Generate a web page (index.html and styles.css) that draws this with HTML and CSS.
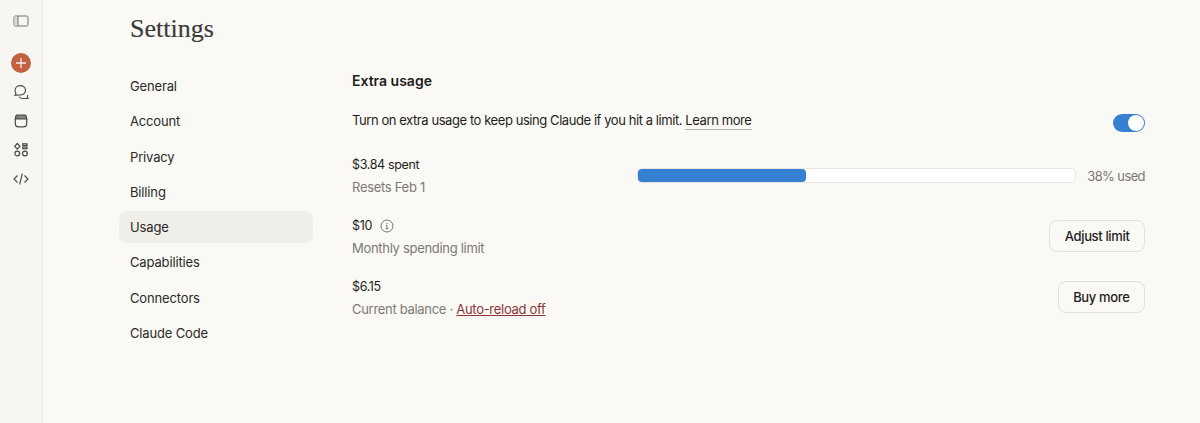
FILE: index.html
```html
<!DOCTYPE html>
<html lang="en">
<head>
    <meta charset="UTF-8">
    <title>Settings</title>
    <link rel="stylesheet" href="styles.css">
</head>
<body>
    <div class="app">
        <aside class="rail">
            <div class="railIcon toggleIcon">
                <svg width="16" height="14" viewBox="0 0 16 14" fill="none" stroke="#77756f" stroke-width="1"><rect x="1" y="2" width="14" height="10" rx="1.2"/><rect x="1.5" y="2.5" width="3.5" height="9" fill="#dcdad3" stroke="none"/><path d="M5 2v10"/></svg>
            </div>
            <div class="newChat">
                <svg width="12" height="12" viewBox="0 0 12 12" stroke="#f7ede8" stroke-width="1.3"><path d="M6 1v10M1 6h10"/></svg>
            </div>
            <div class="railIcon">
                <svg width="16" height="16" viewBox="0 0 16 16" fill="none" stroke="#4a4945" stroke-width="1.1"><path d="M7.3 1.6c3 0 5.2 2 5.2 4.7 0 1.1-.4 2.1-1 2.9-.9 1.1-2.4 1.8-4.2 1.8-1.5 0-3.1.1-5.3.2.9-.8 1-1.3.8-2.1-.4-.8-.7-1.8-.7-2.8 0-2.7 2.2-4.7 5.2-4.7z"/><path d="M6 12.7c.8 1.2 2.3 1.8 4 1.8h4.9c-.6-.6-.7-1-.6-1.7.2-.7.4-1.2.4-1.8"/></svg>
            </div>
            <div class="railIcon">
                <svg width="14" height="14" viewBox="0 0 14 14" fill="none" stroke="#4a4945" stroke-width="1.2"><path d="M3 1h8c.5 0 .8.3 1 .8l.7 3.2H1.300L2 1.800c.2-.5.5-.8 1-.8z" fill="#85837e"/><path d="M1.300 5v4.500c0 2 1.300 3.300 3.300 3.300h4.800c2 0 3.300-1.300 3.300-3.300V5"/></svg>
            </div>
            <div class="railIcon">
                <svg width="16" height="16" viewBox="0 0 16 16" fill="none" stroke="#4a4945" stroke-width="1.2"><path d="M4.300 1.500l2.600 2.800-2.600 2.800-2.600-2.800z"/><rect x="9.800" y="1.800" width="4.200" height="1.700"/><rect x="9.800" y="5" width="4.200" height="1.700"/><circle cx="4.300" cy="11.500" r="2.400"/><circle cx="11.900" cy="11.500" r="2.400"/></svg>
            </div>
            <div class="railIcon">
                <svg width="16" height="14" viewBox="0 0 16 14" fill="none" stroke="#4a4945" stroke-width="1.1"><path d="M4.500 3.500L1 7l3.500 3.500M11.500 3.500L15 7l-3.500 3.500M9.300 1.500L6.700 12.500"/></svg>
            </div>
        </aside>

        <main class="page">
            <h1 class="pageTitle">Settings</h1>
            <div class="columns">
                <nav class="sideNav">
                    <a class="navItem">General</a>
                    <a class="navItem">Account</a>
                    <a class="navItem">Privacy</a>
                    <a class="navItem">Billing</a>
                    <a class="navItem active">Usage</a>
                    <a class="navItem">Capabilities</a>
                    <a class="navItem">Connectors</a>
                    <a class="navItem">Claude Code</a>
                </nav>

                <section class="content">
                    <h2 class="sectionTitle">Extra usage</h2>

                    <div class="row introRow">
                        <p class="introText">Turn on extra usage to keep using Claude if you hit a limit. <a class="learnMore">Learn more</a></p>
                        <div class="toggle"><span class="knob"></span></div>
                    </div>

                    <div class="row spentRow">
                        <div class="info">
                            <div class="amount">$3.84 spent</div>
                            <div class="sub">Resets Feb 1</div>
                        </div>
                        <div class="meter">
                            <div class="bar"><div class="barFill" style="width: 38.5%"></div></div>
                            <span class="used">38% used</span>
                        </div>
                    </div>

                    <div class="row limitRow">
                        <div class="info">
                            <div class="amount">$10
                                <svg class="infoIcon" width="14" height="14" viewBox="0 0 14 14" fill="none" stroke="#77756f"><circle cx="7" cy="7" r="6"/><path d="M7 6.300v3.300M5.800 6.300H7M5.600 9.700h2.800M7 4v1"/></svg>
                            </div>
                            <div class="sub">Monthly spending limit</div>
                        </div>
                        <button class="btn">Adjust limit</button>
                    </div>

                    <div class="row balanceRow">
                        <div class="info">
                            <div class="amount">$6.15</div>
                            <div class="sub">Current balance · <a class="reload">Auto-reload off</a></div>
                        </div>
                        <button class="btn">Buy more</button>
                    </div>
                </section>
            </div>
        </main>
    </div>
</body>
</html>
```

FILE: styles.css
```css
* {
    box-sizing: border-box;
}
html, body {
    margin: 0;
    height: 100%;
    overflow: hidden;
}
body {
    background-color: #faf9f5;
    color: #1f1e1c;
    font-family: "Inter", "Liberation Sans", sans-serif;
    font-size: 13px;
}
.app {
    display: flex;
    height: 423px;
}

.rail {
    width: 43px;
    flex: none;
    background-color: #f7f6f2;
    border-right: 1px solid #ebe9e3;
    display: flex;
    flex-direction: column;
    align-items: center;
    padding-top: 13px;
}
.railIcon {
    width: 20px;
    height: 29px;
    display: flex;
    align-items: center;
    justify-content: center;
}
.toggleIcon {
    height: 16px;
    margin-bottom: 24px;
}
.newChat {
    width: 20px;
    height: 20px;
    border-radius: 50%;
    background-color: #c1613f;
    display: flex;
    align-items: center;
    justify-content: center;
    margin-bottom: 4px;
}

.page {
    flex: 1;
    padding: 14px 55px 0 76px;
}
.pageTitle {
    margin: 0 0 26px 11px;
    font-family: "Liberation Serif", serif;
    font-weight: 400;
    font-size: 26px;
    line-height: 30px;
    color: #3d3c38;
    -webkit-text-stroke: 0.2px #3d3c38;
}
.columns {
    display: flex;
}
.sideNav {
    width: 194px;
    flex: none;
    display: flex;
    flex-direction: column;
    gap: 3.3px;
}
.navItem {
    height: 32px;
    line-height: 32px;
    padding-left: 11px;
    border-radius: 8px;
    color: #2b2a27;
    letter-spacing: -0.15px;
}
.navItem.active {
    background-color: #f0eee8;
}

.content {
    flex: 1;
    margin-left: 39px;
    padding-top: 1px;
}
.sectionTitle {
    margin: 0 0 17px;
    font-size: 14px;
    font-weight: 600;
    line-height: 20px;
}
.row {
    display: flex;
    justify-content: space-between;
    align-items: center;
}
.introRow {
    height: 24px;
    margin-bottom: 23px;
}
.introText {
    margin: 0;
    letter-spacing: -0.43px;
}
.learnMore {
    letter-spacing: -0.4px;
    padding-bottom: 1px;
    border-bottom: 1px solid #b5b3ac;
}
.toggle {
    width: 32px;
    height: 18px;
    margin-top: 5px;
    border-radius: 9px;
    background-color: #3580d3;
    position: relative;
}
.knob {
    position: absolute;
    right: 1px;
    top: 1px;
    width: 16px;
    height: 16px;
    border-radius: 50%;
    background-color: #fff;
}
.info {
    display: flex;
    flex-direction: column;
    gap: 4px;
}
.amount {
    line-height: 18px;
    display: flex;
    align-items: center;
    gap: 8px;
    font-size: 12.5px;
    letter-spacing: -0.35px;
}
.sub {
    line-height: 18px;
    color: #7b7974;
    letter-spacing: -0.3px;
}
.spentRow {
    height: 41px;
    margin-bottom: 20px;
}
.limitRow {
    height: 41px;
    margin-bottom: 20px;
}
.balanceRow {
    height: 41px;
}
.meter {
    display: flex;
    align-items: center;
    gap: 11px;
}
.bar {
    width: 439px;
    height: 15px;
    background-color: #fff;
    border: 1px solid #e8e6df;
    border-radius: 5px;
}
.barFill {
    height: 100%;
    background-color: #3580d3;
    border-radius: 4px;
}
.used {
    color: #7b7974;
    letter-spacing: -0.6px;
}
.reload {
    color: #8c3535;
    text-decoration: underline;
}
.btn {
    height: 32px;
    margin-top: -2px;
    padding: 0 14.5px;
    background-color: #faf9f5;
    border: 1px solid #e3e1da;
    border-radius: 8px;
    font-family: inherit;
    font-size: 13px;
    font-weight: 500;
    letter-spacing: -0.35px;
    color: #1f1e1c;
}
```
